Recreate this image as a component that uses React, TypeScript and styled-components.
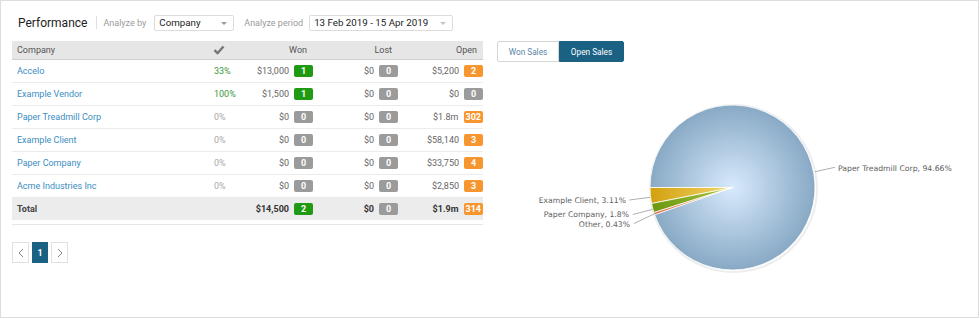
import React from 'react';
import styled, { createGlobalStyle } from 'styled-components';

const GlobalStyle = createGlobalStyle`
  html, body {
    margin: 0;
    padding: 0;
    background: #fff;
  }
  body {
    font-family: Roboto, "Liberation Sans", sans-serif;
  }
`;

const Card = styled.div`
  box-sizing: border-box;
  width: 979px;
  height: 318px;
  border: 1px solid #dedede;
  padding: 13px 11px 0 11px;
`;

const HeaderBar = styled.div`
  display: flex;
  align-items: center;
  height: 17px;
`;

const Title = styled.div`
  font-size: 12px;
  color: #222;
  margin-left: 6px;
`;

const Separator = styled.div`
  width: 1px;
  height: 13px;
  background: #e0e0e0;
  margin: 0 6px 0 9px;
`;

const FilterLabel = styled.span`
  font-size: 9px;
  color: #9a9a9a;
  margin-right: ${(p: { gap: number }) => p.gap}px;
`;

const Select = styled.div<{ w: number; arrow: string }>`
  box-sizing: border-box;
  position: relative;
  width: ${(p) => p.w}px;
  height: 16px;
  border: 1px solid #dcdcdc;
  border-radius: 2px;
  padding-left: 4px;
  font-size: 9.75px;
  line-height: 14px;
  color: #222;
  margin-right: 10px;

  &::after {
    content: '';
    position: absolute;
    right: 6px;
    top: 6px;
    border-left: 3px solid transparent;
    border-right: 3px solid transparent;
    border-top: 3px solid ${(p) => p.arrow};
  }
`;

const Body = styled.div`
  display: flex;
  gap: 14px;
  margin-top: 10px;
`;

const LeftPanel = styled.div`
  width: 471px;
`;

const Row = styled.div<{ head?: boolean; total?: boolean }>`
  display: grid;
  grid-template-columns: 198px 40px 63px 85px 85px;
  align-items: center;
  height: ${(p) => (p.head ? 18 : 22)}px;
  background: ${(p) => (p.head ? '#e6e6e6' : p.total ? '#ececec' : '#fff')};
  border-bottom: ${(p) => (p.total ? 'none' : p.head ? '1px solid #cfcfcf' : '1px solid #ebebeb')};
  font-size: 9px;
  color: #666;
`;

const HeadCell = styled.div<{ right?: boolean }>`
  color: #555;
  text-align: ${(p) => (p.right ? 'right' : 'left')};
  padding: ${(p) => (p.right ? '0 6px 0 0' : '0 0 0 5px')};
`;

const CheckCell = styled.div`
  padding-left: 3px;
  display: flex;
  align-items: center;
`;

const NameCell = styled.div<{ bold?: boolean }>`
  padding-left: 5px;
  color: ${(p) => (p.bold ? '#444' : '#3b8ec2')};
  font-weight: ${(p) => (p.bold ? 700 : 400)};
`;

const PctCell = styled.div<{ good: boolean }>`
  padding-left: 4px;
  color: ${(p) => (p.good ? '#3a983a' : '#a8a8a8')};
`;

const NumCell = styled.div<{ bold?: boolean }>`
  display: flex;
  justify-content: flex-end;
  align-items: center;
  gap: 5px;
  color: ${(p) => (p.bold ? '#333' : '#666')};
  font-weight: ${(p) => (p.bold ? 700 : 400)};
`;

const badgeColors = { green: '#1f9a12', gray: '#9b9b9b', orange: '#f7962f' };

const Badge = styled.span<{ tone: keyof typeof badgeColors }>`
  box-sizing: border-box;
  min-width: 19px;
  height: 12px;
  padding: 0 2px;
  border-radius: 2px;
  background: ${(p) => badgeColors[p.tone]};
  color: #fff;
  font-size: 9px;
  font-weight: 700;
  line-height: 12px;
  text-align: center;
`;

const Divider = styled.div`
  margin-top: 4px;
  border-top: 1px solid #e6e6e6;
`;

const Pager = styled.div`
  display: flex;
  gap: 3px;
  margin-top: 17px;
`;

const PageBtn = styled.div<{ active?: boolean }>`
  box-sizing: border-box;
  width: ${(p) => (p.active ? 16 : 17)}px;
  height: 21px;
  border: 1px solid ${(p) => (p.active ? '#1b6184' : '#e0e0e0')};
  background: ${(p) => (p.active ? '#1b6184' : '#fff')};
  color: ${(p) => (p.active ? '#fff' : '#777')};
  font-size: 9px;
  font-weight: ${(p) => (p.active ? 700 : 400)};
  display: flex;
  align-items: center;
  justify-content: center;
`;

const RightPanel = styled.div`
  flex: 1;
`;

const Tabs = styled.div`
  display: flex;
`;

const Tab = styled.div<{ active?: boolean; w: number }>`
  box-sizing: border-box;
  width: ${(p) => p.w}px;
  height: 21px;
  border: 1px solid ${(p) => (p.active ? '#1b6184' : '#d6d6d6')};
  border-radius: ${(p) => (p.active ? '0 2px 2px 0' : '2px 0 0 2px')};
  background: ${(p) => (p.active ? '#1b6184' : '#fff')};
  color: ${(p) => (p.active ? '#fff' : '#5a87a6')};
  font-size: 8.25px;
  display: flex;
  align-items: center;
  justify-content: center;
`;

const Chart = styled.svg`
  display: block;
`;

type Rec = {
  name: string;
  pct: string;
  won: string;
  wonN: number;
  lost: string;
  lostN: number;
  open: string;
  openN: number;
};

const rows: Rec[] = [
  { name: 'Accelo', pct: '33%', won: '$13,000', wonN: 1, lost: '$0', lostN: 0, open: '$5,200', openN: 2 },
  { name: 'Example Vendor', pct: '100%', won: '$1,500', wonN: 1, lost: '$0', lostN: 0, open: '$0', openN: 0 },
  { name: 'Paper Treadmill Corp', pct: '0%', won: '$0', wonN: 0, lost: '$0', lostN: 0, open: '$1.8m', openN: 302 },
  { name: 'Example Client', pct: '0%', won: '$0', wonN: 0, lost: '$0', lostN: 0, open: '$58,140', openN: 3 },
  { name: 'Paper Company', pct: '0%', won: '$0', wonN: 0, lost: '$0', lostN: 0, open: '$33,750', openN: 4 },
  { name: 'Acme Industries Inc', pct: '0%', won: '$0', wonN: 0, lost: '$0', lostN: 0, open: '$2,850', openN: 3 },
];

const CX = 235.5;
const CY = 125.5;
const R = 82.5;

function slice(a0: number, a1: number) {
  const rad = (d: number) => (d * Math.PI) / 180;
  const x0 = CX + R * Math.cos(rad(a0));
  const y0 = CY + R * Math.sin(rad(a0));
  const x1 = CX + R * Math.cos(rad(a1));
  const y1 = CY + R * Math.sin(rad(a1));
  const large = a1 - a0 > 180 ? 1 : 0;
  return `M${CX} ${CY} L${x0} ${y0} A${R} ${R} 0 ${large} 1 ${x1} ${y1} Z`;
}

const slices = [
  { id: 'blue', a0: 180, a1: 520.776, c0: '#d8eafc', c1: '#88a9c5' },
  { id: 'yellow', a0: 168.804, a1: 180, c0: '#f2d66c', c1: '#d3a10f' },
  { id: 'green', a0: 162.324, a1: 168.804, c0: '#a8c73c', c1: '#6b9810' },
  { id: 'other', a0: 160.776, a1: 162.324, c0: '#f29a6a', c1: '#e0643a' },
];

function CheckIcon() {
  return (
    <svg width="12" height="10" viewBox="0 0 12 10">
      <path d="M1.5 5.2 L4.5 8.2 L10.5 1.5" fill="none" stroke="#777" strokeWidth="2.4" strokeLinejoin="round" />
    </svg>
  );
}

function Chevron({ dir }: { dir: 'left' | 'right' }) {
  const d = dir === 'left' ? 'M5 1 L1 5 L5 9' : 'M1 1 L5 5 L1 9';
  return (
    <svg width="6" height="10" viewBox="0 0 6 10">
      <path d={d} fill="none" stroke="#777" strokeWidth="0.9" />
    </svg>
  );
}

function PieChart() {
  const label = { fontFamily: '"DejaVu Sans", Verdana, sans-serif', fontSize: 7.7, fill: '#606060' };
  return (
    <Chart width="470" height="250" viewBox="0 0 470 250">
      <defs>
        {slices.map((s) => (
          <radialGradient key={s.id} id={`g-${s.id}`} gradientUnits="userSpaceOnUse" cx={CX} cy={CY} r={R}>
            <stop offset="0" stopColor={s.c0} />
            <stop offset="1" stopColor={s.c1} />
          </radialGradient>
        ))}
      </defs>
      <circle cx={CX + 1} cy={CY + 1} r={R + 1} fill="none" stroke="rgba(0,0,0,0.07)" strokeWidth="2" />
      {slices.map((s) => (
        <path key={s.id} d={slice(s.a0, s.a1)} fill={`url(#g-${s.id})`} stroke="#fff" strokeWidth="0.8" strokeLinejoin="round" />
      ))}
      <g stroke="#9a9a9a" strokeWidth="0.8" fill="none">
        <path d="M318 109.7 L338 105.3" />
        <path d="M132.3 138 L153 135.3" />
        <path d="M136 152.5 L155.7 147.3" />
        <path d="M137 161.5 L158 151.5" />
      </g>
      <text x="341" y="108.8" style={label}>Paper Treadmill Corp, 94.66%</text>
      <text x="129" y="140.7" textAnchor="end" style={label}>Example Client, 3.11%</text>
      <text x="132" y="155.4" textAnchor="end" style={label}>Paper Company, 1.8%</text>
      <text x="133" y="164.6" textAnchor="end" style={label}>Other, 0.43%</text>
    </Chart>
  );
}

export default function App() {
  return (
    <>
      <GlobalStyle />
      <Card>
        <HeaderBar>
          <Title>Performance</Title>
          <Separator />
          <FilterLabel gap={8}>Analyze by</FilterLabel>
          <Select w={80} arrow="#999">Company</Select>
          <FilterLabel gap={6}>Analyze period</FilterLabel>
          <Select w={144} arrow="#c4c4c4">13 Feb 2019 - 15 Apr 2019</Select>
        </HeaderBar>
        <Body>
          <LeftPanel>
            <Row head>
              <HeadCell>Company</HeadCell>
              <CheckCell><CheckIcon /></CheckCell>
              <HeadCell right>Won</HeadCell>
              <HeadCell right>Lost</HeadCell>
              <HeadCell right>Open</HeadCell>
            </Row>
            {rows.map((r) => (
              <Row key={r.name}>
                <NameCell>{r.name}</NameCell>
                <PctCell good={r.pct !== '0%'}>{r.pct}</PctCell>
                <NumCell>{r.won}<Badge tone={r.wonN ? 'green' : 'gray'}>{r.wonN}</Badge></NumCell>
                <NumCell>{r.lost}<Badge tone="gray">{r.lostN}</Badge></NumCell>
                <NumCell>{r.open}<Badge tone={r.openN ? 'orange' : 'gray'}>{r.openN}</Badge></NumCell>
              </Row>
            ))}
            <Row total>
              <NameCell bold>Total</NameCell>
              <div />
              <NumCell bold>$14,500<Badge tone="green">2</Badge></NumCell>
              <NumCell bold>$0<Badge tone="gray">0</Badge></NumCell>
              <NumCell bold>$1.9m<Badge tone="orange">314</Badge></NumCell>
            </Row>
            <Divider />
            <Pager>
              <PageBtn><Chevron dir="left" /></PageBtn>
              <PageBtn active>1</PageBtn>
              <PageBtn><Chevron dir="right" /></PageBtn>
            </Pager>
          </LeftPanel>
          <RightPanel>
            <Tabs>
              <Tab w={62}>Won Sales</Tab>
              <Tab w={65} active>Open Sales</Tab>
            </Tabs>
            <PieChart />
          </RightPanel>
        </Body>
      </Card>
    </>
  );
}
